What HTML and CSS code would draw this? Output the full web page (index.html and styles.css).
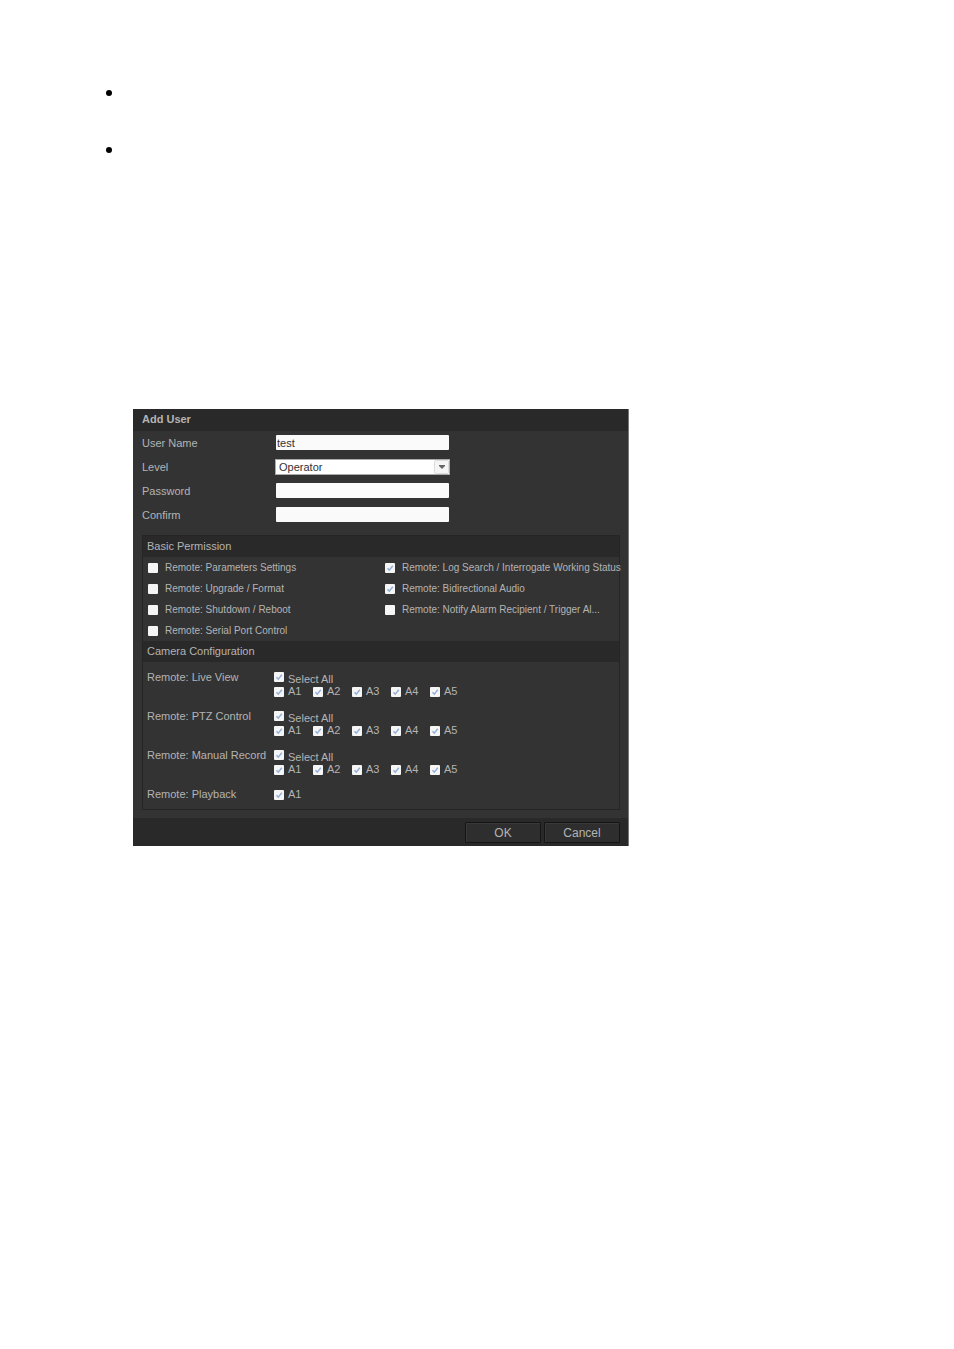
FILE: index.html
```
<!DOCTYPE html>
<html lang="en">
<head>
<meta charset="UTF-8" />
<meta name="viewport" content="width=device-width, initial-scale=1" />
<title>Add User</title>
<link rel="stylesheet" href="styles.css">
</head>
<body>

<ul class="notes">
  <li></li>
  <li></li>
</ul>

<form class="dialog">
  <h1 class="title">Add User</h1>

  <div class="fields">
    <label for="username">User Name</label>
    <input type="text" id="username" value="test">

    <label for="level">Level</label>
    <div class="select">
      <select id="level">
        <option>Operator</option>
        <option>Guest</option>
      </select>
      <span class="arrow"><svg width="6" height="4" viewBox="0 0 6 4"><path d="M0 0h6v1L3 4 0 1z" fill="#666"/></svg></span>
    </div>

    <label for="password">Password</label>
    <input type="password" id="password">

    <label for="confirm">Confirm</label>
    <input type="password" id="confirm">
  </div>

  <div class="panel">
    <h2>Basic Permission</h2>
    <div class="permissions">
      <label><input type="checkbox">Remote: Parameters Settings</label>
      <label><input type="checkbox" checked>Remote: Log Search / Interrogate Working Status</label>
      <label><input type="checkbox">Remote: Upgrade / Format</label>
      <label><input type="checkbox" checked>Remote: Bidirectional Audio</label>
      <label><input type="checkbox">Remote: Shutdown / Reboot</label>
      <label><input type="checkbox">Remote: Notify Alarm Recipient / Trigger Al...</label>
      <label><input type="checkbox">Remote: Serial Port Control</label>
    </div>

    <h2>Camera Configuration</h2>
    <div class="cameras">
      <div class="camera-row">
        <span>Remote: Live View</span>
        <div>
          <label class="all"><input type="checkbox" checked><span>Select All</span></label>
          <div class="channels">
            <label><input type="checkbox" checked>A1</label>
            <label><input type="checkbox" checked>A2</label>
            <label><input type="checkbox" checked>A3</label>
            <label><input type="checkbox" checked>A4</label>
            <label><input type="checkbox" checked>A5</label>
          </div>
        </div>
      </div>
      <div class="camera-row">
        <span>Remote: PTZ Control</span>
        <div>
          <label class="all"><input type="checkbox" checked><span>Select All</span></label>
          <div class="channels">
            <label><input type="checkbox" checked>A1</label>
            <label><input type="checkbox" checked>A2</label>
            <label><input type="checkbox" checked>A3</label>
            <label><input type="checkbox" checked>A4</label>
            <label><input type="checkbox" checked>A5</label>
          </div>
        </div>
      </div>
      <div class="camera-row">
        <span>Remote: Manual Record</span>
        <div>
          <label class="all"><input type="checkbox" checked><span>Select All</span></label>
          <div class="channels">
            <label><input type="checkbox" checked>A1</label>
            <label><input type="checkbox" checked>A2</label>
            <label><input type="checkbox" checked>A3</label>
            <label><input type="checkbox" checked>A4</label>
            <label><input type="checkbox" checked>A5</label>
          </div>
        </div>
      </div>
      <div class="camera-row">
        <span>Remote: Playback</span>
        <div class="channels">
          <label><input type="checkbox" checked>A1</label>
        </div>
      </div>
    </div>
  </div>

  <div class="footer">
    <button type="button">OK</button>
    <button type="button">Cancel</button>
  </div>
</form>

</body>
</html>
```

FILE: styles.css
```
* {
  box-sizing: border-box;
}
body {
  margin: 0;
  padding: 90px 32px 40px 106px;
  background: #fff;
  font-family: "Liberation Sans", Arial, sans-serif;
  font-size: 11px;
}
.notes {
  list-style: none;
  margin: 0 0 256px;
  padding: 0;
  display: grid;
  gap: 51px;
}
.notes li {
  width: 6px;
  height: 6px;
  border-radius: 50%;
  background: #000;
}
.dialog {
  max-width: 496px;
  margin-left: 27px;
  background: #333;
  color: #b4b4b4;
  border-right: 1px solid #777;
  overflow: hidden;
}
.title {
  margin: 0;
  padding: 0 9px 2px;
  font-size: 11px;
  line-height: 20px;
  background: #292929;
}
.fields {
  display: grid;
  grid-template-columns: 133px 175px;
  grid-auto-rows: 23px;
  row-gap: 1px;
  align-items: center;
  padding: 0 9px 1px;
}
.fields input {
  width: 173px;
  height: 15px;
  margin: 0 1px;
  padding: 0 1px;
  border: none;
  border-radius: 1px;
  background: #fafafa;
  color: #333;
  font: inherit;
}
.select {
  display: flex;
  align-items: center;
  height: 16px;
  background: #fff;
  border: 1px solid #aaa;
  position: relative;
}
.select select {
  appearance: none;
  width: 100%;
  height: 14px;
  padding: 0 3px;
  border: none;
  background: transparent;
  color: #333;
  font: inherit;
}
.arrow {
  position: absolute;
  right: 0;
  top: 0;
  width: 15px;
  height: 14px;
  display: flex;
  align-items: center;
  justify-content: center;
  border: 1px solid #ddd;
  border-radius: 2px;
  background: #f5f5f5;
  pointer-events: none;
}
.panel {
  margin: 8px 8px 8px 9px;
  border: 1px solid #252525;
}
.panel h2 {
  margin: 0;
  padding: 0 4px;
  font-size: 11px;
  font-weight: normal;
  line-height: 21px;
  background: #292929;
}
input[type="checkbox"] {
  appearance: none;
  flex: none;
  width: 10px;
  height: 10px;
  margin: 0;
  border-radius: 1px;
  background: #f5f5f5;
}
input[type="checkbox"]:checked {
  background: #f5f5f5 url("data:image/svg+xml,%3Csvg xmlns='http://www.w3.org/2000/svg' viewBox='0 0 10 10'%3E%3Cpath d='M2.5 5.2L4.3 7.2L7.8 2.8' fill='none' stroke='%2394b0d8' stroke-width='1.5'/%3E%3C/svg%3E");
}
.permissions {
  display: grid;
  grid-template-columns: 1fr 234px;
  grid-auto-rows: 21px;
  padding: 0 0 0 5px;
  font-size: 10px;
}
.permissions label {
  display: flex;
  align-items: center;
  gap: 7px;
  white-space: nowrap;
}
.cameras {
  display: grid;
  gap: 12px;
  padding: 9px 4px 8px;
}
.camera-row {
  display: grid;
  grid-template-columns: 127px 1fr;
  line-height: 13px;
}
.channels {
  display: grid;
  grid-template-columns: repeat(auto-fill, 39px);
}
.channels label,
.all {
  display: flex;
  align-items: center;
  gap: 4px;
}
.all {
  align-items: flex-start;
  padding-top: 1px;
}
.all span {
  padding-top: 1px;
  line-height: 12px;
}
.footer {
  display: flex;
  justify-content: flex-end;
  gap: 3px;
  padding: 4px 8px 3px;
  background: #292929;
}
.footer button {
  width: 76px;
  height: 21px;
  padding: 0;
  border: 1px solid #151515;
  border-radius: 1px;
  background: #2e2e2e;
  box-shadow: inset 1px 1px 0 #383838;
  color: #b4b4b4;
  font: inherit;
  font-size: 12px;
  cursor: pointer;
}
```
